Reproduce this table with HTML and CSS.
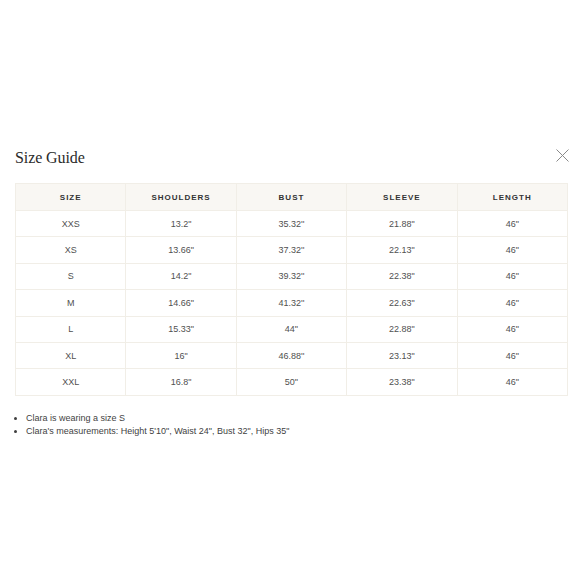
FILE: index.html
```html
<!DOCTYPE html>
<html lang="en">
<head>
<meta charset="utf-8">
<title>Size Guide</title>
<link rel="stylesheet" href="styles.css">
</head>
<body>
<div class="modal">
  <div class="modal-head">
    <h2 class="title">Size Guide</h2>
    <button class="close" aria-label="Close">
      <svg width="13" height="13" viewBox="0 0 13 13"><path d="M0.5 0.5 L12.5 12.5 M12.5 0.5 L0.5 12.5" stroke="#8a8a8a" stroke-width="1" fill="none"/></svg>
    </button>
  </div>
  <table class="sizes">
    <thead>
      <tr><th>Size</th><th>Shoulders</th><th>Bust</th><th>Sleeve</th><th>Length</th></tr>
    </thead>
    <tbody>
      <tr><td>XXS</td><td>13.2"</td><td>35.32''</td><td>21.88"</td><td>46"</td></tr>
      <tr><td>XS</td><td>13.66"</td><td>37.32''</td><td>22.13"</td><td>46"</td></tr>
      <tr><td>S</td><td>14.2"</td><td>39.32''</td><td>22.38"</td><td>46"</td></tr>
      <tr><td>M</td><td>14.66"</td><td>41.32''</td><td>22.63"</td><td>46"</td></tr>
      <tr><td>L</td><td>15.33"</td><td>44"</td><td>22.88"</td><td>46"</td></tr>
      <tr><td>XL</td><td>16"</td><td>46.88''</td><td>23.13"</td><td>46"</td></tr>
      <tr><td>XXL</td><td>16.8"</td><td>50"</td><td>23.38"</td><td>46"</td></tr>
    </tbody>
  </table>
  <ul class="notes">
    <li>Clara is wearing a size S</li>
    <li>Clara's measurements: Height 5'10", Waist 24", Bust 32", Hips 35"</li>
  </ul>
</div>
</body>
</html>
```
FILE: styles.css
```css
html, body {
  margin: 0;
  padding: 0;
  background: #ffffff;
}
.modal {
  padding: 148px 11px 0 15px;
  font-family: "Liberation Sans", Arial, sans-serif;
  color: #444;
}
.modal-head {
  display: flex;
  justify-content: space-between;
  align-items: flex-start;
  height: 20px;
  margin-bottom: 15px;
}
.title {
  margin: 0;
  font-family: "Liberation Serif", "Times New Roman", serif;
  font-weight: normal;
  font-size: 16px;
  line-height: 20px;
  color: #2b2b2b;
  letter-spacing: -0.1px;
}
.close {
  border: 0;
  background: none;
  padding: 0;
  margin-top: 1px;
  width: 13px;
  height: 13px;
  display: block;
  cursor: pointer;
}
.close svg { display: block; }
.sizes {
  width: 553px;
  border-collapse: collapse;
  table-layout: fixed;
}
.sizes th, .sizes td {
  border: 1px solid #f1eee7;
  text-align: center;
  padding: 0;
}
.sizes th {
  background: #f9f7f3;
  height: 26px;
  font-size: 8px;
  font-weight: bold;
  letter-spacing: 1px;
  text-transform: uppercase;
  color: #333;
}
.sizes td {
  height: 25.4px;
  font-size: 9px;
  color: #505050;
}
.notes {
  margin: 16px 0 0 0;
  padding: 0 0 0 11px;
  font-size: 9px;
  line-height: 13px;
  color: #3f3f3f;
}
```
